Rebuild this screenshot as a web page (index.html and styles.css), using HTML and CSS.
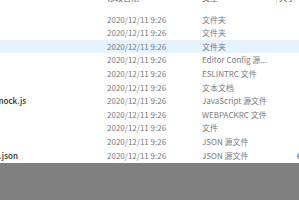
FILE: index.html
```html
<!DOCTYPE html>
<html lang="zh">
<head>
<meta charset="utf-8">
<link rel="stylesheet" href="styles.css">
</head>
<body>
<div class="view">
  <div class="header">
    <div class="c-name"></div>
    <div class="c-date">修改日期</div>
    <div class="c-type">类型</div>
    <div class="c-size">大小</div>
  </div>
  <div class="rows">
    <div class="row"><div class="c-name"></div><div class="c-date">2020/12/11 9:26</div><div class="c-type">文件夹</div><div class="c-size"></div></div>
    <div class="row"><div class="c-name"></div><div class="c-date">2020/12/11 9:26</div><div class="c-type">文件夹</div><div class="c-size"></div></div>
    <div class="row hover"><div class="c-name"></div><div class="c-date">2020/12/11 9:26</div><div class="c-type">文件夹</div><div class="c-size"></div></div>
    <div class="row"><div class="c-name"></div><div class="c-date">2020/12/11 9:26</div><div class="c-type">Editor Config 源...</div><div class="c-size"></div></div>
    <div class="row"><div class="c-name"></div><div class="c-date">2020/12/11 9:26</div><div class="c-type">ESLINTRC 文件</div><div class="c-size"></div></div>
    <div class="row"><div class="c-name"></div><div class="c-date">2020/12/11 9:26</div><div class="c-type">文本文档</div><div class="c-size"></div></div>
    <div class="row"><div class="c-name"><span class="fname">mock.js</span></div><div class="c-date">2020/12/11 9:26</div><div class="c-type">JavaScript 源文件</div><div class="c-size"></div></div>
    <div class="row"><div class="c-name"></div><div class="c-date">2020/12/11 9:26</div><div class="c-type">WEBPACKRC 文件</div><div class="c-size"></div></div>
    <div class="row"><div class="c-name"></div><div class="c-date">2020/12/11 9:26</div><div class="c-type">文件</div><div class="c-size"></div></div>
    <div class="row"><div class="c-name"></div><div class="c-date">2020/12/11 9:26</div><div class="c-type">JSON 源文件</div><div class="c-size"></div></div>
    <div class="row"><div class="c-name"><span class="fname">t.json</span></div><div class="c-date">2020/12/11 9:26</div><div class="c-type">JSON 源文件</div><div class="c-size">6</div></div>
    <div class="row"><div class="c-name"></div><div class="c-date">2020/12/11 9:26</div><div class="c-type">JSON 源文件</div><div class="c-size"></div></div>
  </div>
</div>
<div class="backdrop"></div>
</body>
</html>
```

FILE: styles.css
```css
html, body {
  margin: 0;
  padding: 0;
  background: #ffffff;
  overflow: hidden;
}
body {
  width: 299px;
  height: 200px;
  font-family: "Noto Sans CJK SC", "Noto Sans", sans-serif;
  font-size: 8px;
  color: #7a7a7a;
}
.view {
  width: 299px;
  height: 200px;
  overflow: hidden;
}
.header {
  display: flex;
  height: 14px;
  margin-top: -9px;
  line-height: 14px;
  color: #6a6a6a;
}
.rows {
  padding-top: 7.7px;
}
.row {
  display: flex;
  height: 13.6px;
  line-height: 13.6px;
  white-space: nowrap;
}
.row.hover {
  background: #e5f3ff;
}
.c-name {
  width: 107px;
  flex: none;
  overflow: hidden;
}
.fname {
  display: block;
  margin-left: -4px;
  color: #2b2b2b;
  font-weight: 500;
}
.c-date {
  width: 95px;
  flex: none;
}
.c-type {
  width: 74px;
  flex: none;
}
.c-size {
  flex: 1;
  padding-left: 21px;
  color: #444;
}
.header .c-size {
  border-left: 1px solid #e5e5e5;
  padding-left: 2px;
}
.backdrop {
  position: fixed;
  left: 0;
  right: 0;
  top: 163px;
  bottom: 0;
  background: #808080;
}
```
